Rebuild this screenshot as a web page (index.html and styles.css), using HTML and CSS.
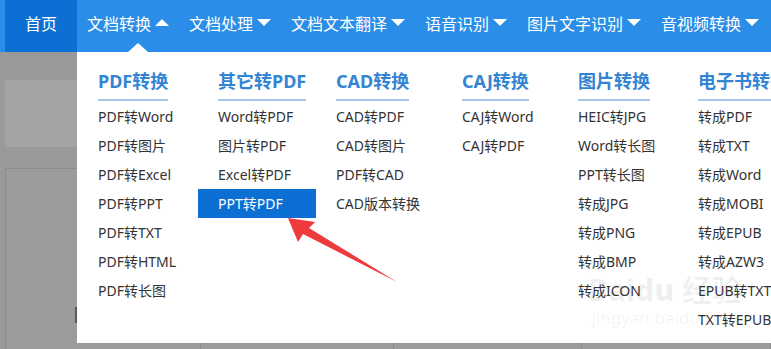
FILE: index.html
```html
<!DOCTYPE html>
<html lang="zh-CN">
<head>
    <meta charset="UTF-8">
    <meta name="viewport" content="width=device-width, initial-scale=1.0">
    <title>文档转换</title>
    <link rel="stylesheet" href="styles.css">
</head>
<body>
    <div class="page">
        <div class="nav">
            <a class="nav-item home">首页</a>
            <a class="nav-item active">文档转换<span class="caret up"></span></a>
            <a class="nav-item">文档处理<span class="caret"></span></a>
            <a class="nav-item">文档文本翻译<span class="caret"></span></a>
            <a class="nav-item">语音识别<span class="caret"></span></a>
            <a class="nav-item">图片文字识别<span class="caret"></span></a>
            <a class="nav-item">音视频转换<span class="caret"></span></a>
        </div>

        <div class="content">
            <div class="banner"></div>
            <div class="cards">
                <div class="card first"><span class="card-title">PDF转Word</span></div>
                <div class="card second"></div>
                <div class="card third"></div>
                <div class="card"></div>
            </div>
        </div>

        <div class="dropdown">
            <div class="col">
                <h3>PDF转换</h3>
                <ul>
                    <li>PDF转Word</li>
                    <li>PDF转图片</li>
                    <li>PDF转Excel</li>
                    <li>PDF转PPT</li>
                    <li>PDF转TXT</li>
                    <li>PDF转HTML</li>
                    <li>PDF转长图</li>
                </ul>
            </div>
            <div class="col">
                <h3>其它转PDF</h3>
                <ul>
                    <li>Word转PDF</li>
                    <li>图片转PDF</li>
                    <li>Excel转PDF</li>
                    <li class="selected">PPT转PDF</li>
                </ul>
            </div>
            <div class="col">
                <h3>CAD转换</h3>
                <ul>
                    <li>CAD转PDF</li>
                    <li>CAD转图片</li>
                    <li>PDF转CAD</li>
                    <li>CAD版本转换</li>
                </ul>
            </div>
            <div class="col">
                <h3>CAJ转换</h3>
                <ul>
                    <li>CAJ转Word</li>
                    <li>CAJ转PDF</li>
                </ul>
            </div>
            <div class="col">
                <h3>图片转换</h3>
                <ul>
                    <li>HEIC转JPG</li>
                    <li>Word转长图</li>
                    <li>PPT转长图</li>
                    <li>转成JPG</li>
                    <li>转成PNG</li>
                    <li>转成BMP</li>
                    <li>转成ICON</li>
                </ul>
            </div>
            <div class="col">
                <h3>电子书转换</h3>
                <ul>
                    <li>转成PDF</li>
                    <li>转成TXT</li>
                    <li>转成Word</li>
                    <li>转成MOBI</li>
                    <li>转成EPUB</li>
                    <li>转成AZW3</li>
                    <li>EPUB转TXT</li>
                    <li>TXT转EPUB</li>
                </ul>
            </div>
        </div>

        <svg class="arrow" width="771" height="349" viewBox="0 0 771 349">
            <polygon points="288,218 315,222 309,228 397,282 303,234 298,242" fill="#ee3a3c"/>
        </svg>

        <div class="watermark">
            <span class="wm-logo">Bai<b>du</b> 经验</span>
            <span class="wm-url">jingyan.baidu.com</span>
        </div>
    </div>
</body>
</html>
```

FILE: styles.css
```css
* {
    margin: 0;
    padding: 0;
    box-sizing: border-box;
}

body {
    background-color: #999;
    font-family: "Noto Sans", "Noto Sans CJK SC", sans-serif;
    overflow: hidden;
}

.page {
    position: relative;
    width: 771px;
    height: 349px;
    overflow: hidden;
}

/* top navigation */
.nav {
    display: flex;
    height: 52px;
    padding-left: 5px;
    background-color: #2a8de8;
    white-space: nowrap;
}

.nav-item {
    position: relative;
    display: flex;
    align-items: center;
    gap: 4px;
    height: 52px;
    padding: 0 10px 7px;
    color: #fff;
    font-size: 16px;
    font-family: "Noto Sans CJK SC", sans-serif;
}

.nav-item.home {
    padding: 0 20px 7px;
    background-color: #0b6fd3;
}

.caret {
    width: 0;
    height: 0;
    border-left: 7px solid transparent;
    border-right: 7px solid transparent;
    border-top: 7px solid #fff;
}

.caret.up {
    border-top: none;
    border-bottom: 7px solid #fff;
}

/* dimmed page behind the menu */
.content {
    padding: 28px 0 0 5px;
}

.banner {
    width: 72px;
    height: 67px;
    background-color: #a2a4a6;
}

.cards {
    display: flex;
    margin-top: 21px;
    height: 200px;
}

.card {
    width: 235px;
    border: 1px solid #8b8b8b;
    background-color: #9b9b9b;
}

.card.first {
    width: 227px;
    padding: 128px 0 0 67px;
}

.card.second {
    width: 241px;
}

.card.third {
    width: 234px;
}

.card + .card {
    border-left: none;
}

.card-title {
    color: #555;
    font-size: 22px;
}

/* dropdown panel */
.dropdown {
    position: absolute;
    top: 52px;
    left: 77px;
    right: 0;
    height: 291px;
    padding: 17px 0 0 1px;
    background-color: #fff;
    display: grid;
    grid-template-columns: 120px 118px 126px 116px 120px 1fr;
    white-space: nowrap;
}

.dropdown::before {
    content: "";
    position: absolute;
    top: -9px;
    left: 51px;
    border-left: 10px solid transparent;
    border-right: 10px solid transparent;
    border-bottom: 9px solid #fff;
}

.col h3 {
    display: inline-block;
    margin-left: 20px;
    padding-bottom: 6px;
    border-bottom: 2px solid #a9c4ea;
    color: #3484d4;
    font-size: 18px;
    line-height: 24px;
    font-weight: bold;
}

.col ul {
    list-style: none;
    margin-top: 1px;
}

.col li {
    padding: 0 20px;
    height: 29px;
    line-height: 29px;
    color: #333;
    font-size: 14px;
}

.col li.selected {
    background-color: #0b6fd3;
    color: #fff;
}

.arrow {
    position: absolute;
    top: 0;
    left: 0;
}

.watermark {
    position: absolute;
    left: 588px;
    top: 272px;
    display: flex;
    flex-direction: column;
    align-items: center;
    color: rgba(0, 0, 0, 0.06);
    pointer-events: none;
}

.wm-logo {
    font-size: 30px;
    font-weight: bold;
    line-height: 36px;
}

.wm-url {
    font-size: 17px;
    line-height: 20px;
}
```
